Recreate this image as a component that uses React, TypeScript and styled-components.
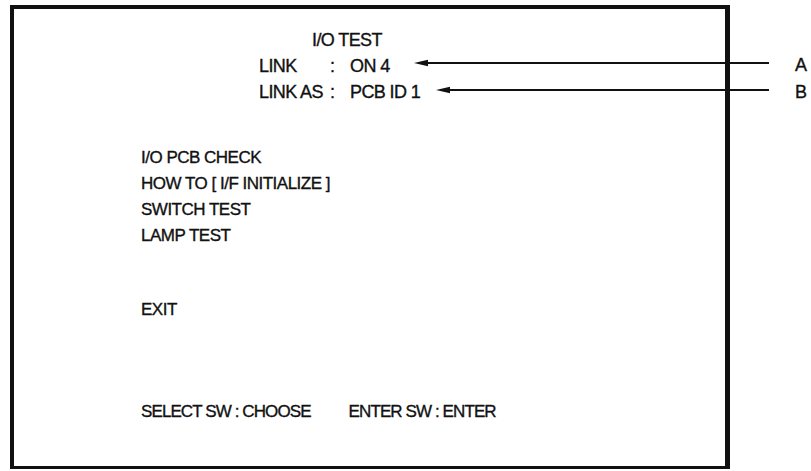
import styled, { createGlobalStyle } from "styled-components";

const GlobalStyle = createGlobalStyle`
  html, body {
    margin: 0;
    padding: 0;
    background: #ffffff;
  }
  body {
    font-family: "Liberation Sans", Arial, sans-serif;
    color: #111111;
  }
`;

interface StatusRow {
  label: string;
  value: string;
  tag: string;
  arrowTop: number;
  arrowStart: number;
}

const statusRows: StatusRow[] = [
  { label: "LINK", value: "ON 4", tag: "A", arrowTop: 53, arrowStart: 414 },
  { label: "LINK AS", value: "PCB ID 1", tag: "B", arrowTop: 80, arrowStart: 436 },
];

const menuItems = [
  "I/O PCB CHECK",
  "HOW TO [ I/F INITIALIZE ]",
  "SWITCH TEST",
  "LAMP TEST",
];

export default function App() {
  return (
    <>
      <GlobalStyle />
      <Page>
        <Screen>
          <Header>
            <Title>I/O TEST</Title>
            <StatusGrid>
              {statusRows.map((row) => (
                <StatusLine key={row.tag}>
                  <span>{row.label}</span>
                  <span>:</span>
                  <span>{row.value}</span>
                </StatusLine>
              ))}
            </StatusGrid>
          </Header>

          <Menu>
            {menuItems.map((item) => (
              <div key={item}>{item}</div>
            ))}
          </Menu>

          <Exit>EXIT</Exit>

          <Footer>
            <span>SELECT SW : CHOOSE</span>
            <span>ENTER SW : ENTER</span>
          </Footer>
        </Screen>

        {statusRows.map((row) => (
          <Callout key={row.tag} $top={row.arrowTop} $start={row.arrowStart}>
            <ArrowHead viewBox="0 0 14 8">
              <polygon points="0,4 14,0.8 14,7.2" fill="#111" />
            </ArrowHead>
            <Shaft />
            <Tag>{row.tag}</Tag>
          </Callout>
        ))}
      </Page>
    </>
  );
}

const Page = styled.div`
  position: relative;
  width: 811px;
  height: 471px;
  padding: 5px 0 0 10px;
  box-sizing: border-box;
  overflow: hidden;
`;

const Screen = styled.div`
  width: 720px;
  height: 464px;
  box-sizing: border-box;
  border: 4px solid #111;
  border-right-width: 5px;
  border-bottom-width: 3px;
  padding: 18px 0 0 127px;
  display: flex;
  flex-direction: column;
  font-size: 17px;
  letter-spacing: -0.5px;
  line-height: 26px;
  -webkit-text-stroke: 0.35px #111;
`;

const Header = styled.div`
  padding-left: 118px;
  display: flex;
  flex-direction: column;
  font-size: 18px;
  letter-spacing: -0.6px;
`;

const Title = styled.div`
  padding-left: 53px;
`;

const StatusGrid = styled.div`
  display: flex;
  flex-direction: column;
`;

const StatusLine = styled.div`
  display: grid;
  grid-template-columns: 71px 20px auto;
`;

const Menu = styled.div`
  margin-top: 40px;
  display: flex;
  flex-direction: column;
`;

const Exit = styled.div`
  margin-top: 48px;
`;

const Footer = styled.div`
  margin-top: 76px;
  display: flex;
  gap: 38px;
  letter-spacing: -0.9px;
`;

const Callout = styled.div<{ $top: number; $start: number }>`
  position: absolute;
  top: ${(p) => p.$top}px;
  left: ${(p) => p.$start}px;
  right: 0;
  height: 20px;
  display: flex;
  align-items: center;
`;

const ArrowHead = styled.svg`
  width: 14px;
  height: 8px;
  flex: none;
`;

const Shaft = styled.div`
  flex: 1;
  height: 1.5px;
  background: #111;
`;

const Tag = styled.span`
  flex: none;
  width: 14px;
  margin: 5px 2px 0 26px;
  font-size: 18px;
  -webkit-text-stroke: 0.35px #111;
`;
